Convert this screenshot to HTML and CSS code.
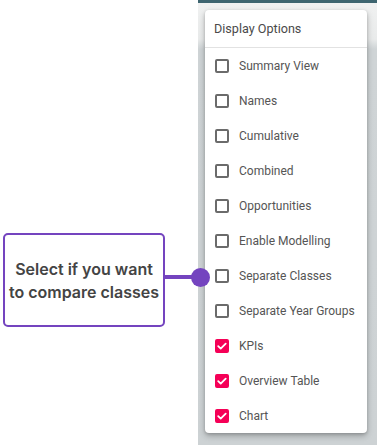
FILE: index.html
```html
<!DOCTYPE html>
<html lang="en">
<head>
  <meta charset="UTF-8" />
  <meta name="viewport" content="width=device-width, initial-scale=1.0" />
  <title>Display Options</title>
  <link rel="stylesheet" href="styles.css">
</head>
<body>
  <div class="page">
    <div class="notes">
      <div class="callout">
        <p>Select if you want<br>to compare classes</p>
        <span class="connector"></span>
        <span class="dot"></span>
      </div>
    </div>

    <div class="panel">
      <div class="menu">
        <div class="menu-title">Display Options</div>
        <label class="option"><span class="box"></span>Summary View</label>
        <label class="option"><span class="box"></span>Names</label>
        <label class="option"><span class="box"></span>Cumulative</label>
        <label class="option"><span class="box"></span>Combined</label>
        <label class="option"><span class="box"></span>Opportunities</label>
        <label class="option"><span class="box"></span>Enable Modelling</label>
        <label class="option"><span class="box"></span>Separate Classes</label>
        <label class="option"><span class="box"></span>Separate Year Groups</label>
        <label class="option checked"><span class="box"><svg viewBox="0 0 14 14" width="14" height="14"><path d="M3.2 7.2l2.5 2.4 5-5" fill="none" stroke="#fff" stroke-width="1.8" stroke-linecap="round" stroke-linejoin="round"/></svg></span>KPIs</label>
        <label class="option checked"><span class="box"><svg viewBox="0 0 14 14" width="14" height="14"><path d="M3.2 7.2l2.5 2.4 5-5" fill="none" stroke="#fff" stroke-width="1.8" stroke-linecap="round" stroke-linejoin="round"/></svg></span>Overview Table</label>
        <label class="option checked"><span class="box"><svg viewBox="0 0 14 14" width="14" height="14"><path d="M3.2 7.2l2.5 2.4 5-5" fill="none" stroke="#fff" stroke-width="1.8" stroke-linecap="round" stroke-linejoin="round"/></svg></span>Chart</label>
      </div>
    </div>
  </div>
</body>
</html>
```

FILE: styles.css
```css
body {
  margin: 0;
  font-family: Roboto, "Liberation Sans", sans-serif;
  background-color: white;
}
.page {
  display: flex;
  width: 377px;
  height: 445px;
  overflow: hidden;
}
.notes {
  width: 198px;
  flex-shrink: 0;
  position: relative;
  z-index: 2;
}
.callout {
  position: relative;
  margin: 233px 0 0 3px;
  width: 158px;
  height: 90px;
  border: 2px solid #7444bf;
  border-radius: 5px;
  background-color: white;
  display: flex;
  align-items: center;
  justify-content: center;
}
.callout p {
  margin: 0;
  padding-top: 2px;
  font-family: Inter, "Open Sans", sans-serif;
  font-weight: 600;
  font-size: 16px;
  line-height: 23px;
  color: #444;
  text-align: center;
}
.connector {
  position: absolute;
  left: 160px;
  top: 40px;
  width: 30px;
  height: 4px;
  background-color: #7444bf;
}
.dot {
  position: absolute;
  left: 186px;
  top: 33px;
  width: 19px;
  height: 19px;
  border-radius: 50%;
  background-color: #7444bf;
}
.panel {
  flex: 1;
  border-top: 3px solid #3e6570;
  background: linear-gradient(#f0f1f1 0, #e9ebeb 36px, #cfd4d6 46px, #cdd2d4 100%);
  padding: 7px 0 0 7px;
}
.menu {
  width: 162px;
  background-color: white;
  border-radius: 4px;
  box-shadow: 0 3px 6px rgba(0, 0, 0, 0.25), 0 1px 3px rgba(0, 0, 0, 0.15);
}
.menu-title {
  height: 37px;
  line-height: 37px;
  padding-left: 9px;
  font-size: 12.6px;
  color: #4a4a4a;
  border-bottom: 1px solid #e2e2e2;
}
.option {
  display: flex;
  align-items: center;
  height: 35px;
  padding-left: 10px;
  font-size: 12px;
  color: #555;
  cursor: pointer;
}
.box {
  width: 14px;
  height: 14px;
  box-sizing: border-box;
  border: 2px solid #6b6b6b;
  border-radius: 2px;
  margin-right: 10px;
  flex-shrink: 0;
  display: flex;
}
.box svg {
  margin: -2px;
}
.checked .box {
  border-color: #f50057;
  background-color: #f50057;
}
```
